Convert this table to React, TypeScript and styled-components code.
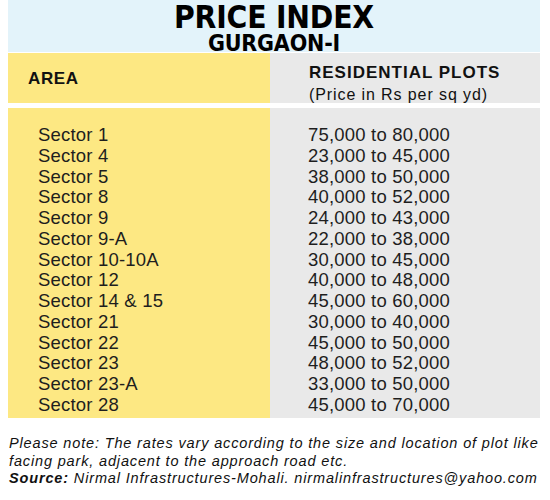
import React from 'react'
import styled, { createGlobalStyle } from 'styled-components'

const rows: [string, string][] = [
  ['Sector 1', '75,000 to 80,000'],
  ['Sector 4', '23,000 to 45,000'],
  ['Sector 5', '38,000 to 50,000'],
  ['Sector 8', '40,000 to 52,000'],
  ['Sector 9', '24,000 to 43,000'],
  ['Sector 9-A', '22,000 to 38,000'],
  ['Sector 10-10A', '30,000 to 45,000'],
  ['Sector 12', '40,000 to 48,000'],
  ['Sector 14 & 15', '45,000 to 60,000'],
  ['Sector 21', '30,000 to 40,000'],
  ['Sector 22', '45,000 to 50,000'],
  ['Sector 23', '48,000 to 52,000'],
  ['Sector 23-A', '33,000 to 50,000'],
  ['Sector 28', '45,000 to 70,000'],
]

const GlobalStyle = createGlobalStyle`
  body {
    margin: 0;
    background: #fff;
    font-family: "Liberation Sans", Arial, sans-serif;
  }
`

export default () => (
  <>
    <GlobalStyle />
    <Page>
      <TitleBlock>
        <Title>PRICE INDEX</Title>
        <SubTitle>GURGAON-I</SubTitle>
      </TitleBlock>
      <Table>
        <HeadCell $tone="yellow">
          <AreaLabel>AREA</AreaLabel>
        </HeadCell>
        <HeadCell $tone="gray">
          <PlotsLabel>RESIDENTIAL PLOTS</PlotsLabel>
          <PlotsNote>(Price in Rs per sq yd)</PlotsNote>
        </HeadCell>
        <BodyCol $tone="yellow" $indent={30}>
          {rows.map(([area]) => (
            <Line key={area}>{area}</Line>
          ))}
        </BodyCol>
        <BodyCol $tone="gray" $indent={38}>
          {rows.map(([area, price]) => (
            <Line key={area}>{price}</Line>
          ))}
        </BodyCol>
      </Table>
      <Notes>
        <p>Please note: The rates vary according to the size and location of plot like</p>
        <p>facing park, adjacent to the approach road etc.</p>
        <p>
          <b>Source:</b> Nirmal Infrastructures-Mohali. nirmalinfrastructures@yahoo.com
        </p>
      </Notes>
    </Page>
  </>
)

const tones = {
  yellow: '#fde883',
  gray: '#e9e9e9',
}

const Page = styled.div`
  width: 532px;
  padding-left: 8px;
`

const TitleBlock = styled.header`
  height: 52px;
  padding-top: 2px;
  box-sizing: border-box;
  background: #e3f3fa;
  text-align: center;
  font-family: "DejaVu Sans Condensed", "DejaVu Sans", sans-serif;
  font-weight: 700;
  color: #000;
`

const Title = styled.h1`
  margin: 0;
  font-size: 31.5px;
  line-height: 30px;
  letter-spacing: -0.2px;
`

const SubTitle = styled.h2`
  margin: 0;
  font-size: 23px;
  line-height: 22px;
  letter-spacing: -0.2px;
`

const Table = styled.div`
  display: grid;
  grid-template-columns: 262px 270px;
  grid-template-rows: 50px 310px;
  row-gap: 5px;
  margin-top: 1px;
  color: #1e1e1e;
`

const HeadCell = styled.div<{ $tone: 'yellow' | 'gray' }>`
  background: ${p => tones[p.$tone]};
  display: flex;
  flex-direction: column;
  padding: ${p => (p.$tone === 'yellow' ? '15px 0 0 20px' : '9px 0 0 39px')};
  box-sizing: border-box;
  color: #111;
`

const AreaLabel = styled.div`
  font-size: 17px;
  line-height: 22px;
  font-weight: 700;
  letter-spacing: 0.6px;
`

const PlotsLabel = styled.div`
  font-size: 17px;
  line-height: 22px;
  font-weight: 700;
  letter-spacing: 1px;
`

const PlotsNote = styled.div`
  font-size: 16px;
  line-height: 22px;
  letter-spacing: 0.9px;
`

const BodyCol = styled.div<{ $tone: 'yellow' | 'gray'; $indent: number }>`
  background: ${p => tones[p.$tone]};
  padding: 17px 0 0 ${p => p.$indent}px;
  box-sizing: border-box;
`

const Line = styled.div`
  font-size: 18.5px;
  line-height: 20.75px;
  letter-spacing: 0.2px;
  white-space: nowrap;
`

const Notes = styled.div`
  padding: 17px 0 0 1px;
  font-style: italic;
  font-size: 14.5px;
  line-height: 17.5px;
  letter-spacing: 0.85px;
  color: #111;
  white-space: nowrap;
  p {
    margin: 0;
  }
  b {
    font-weight: 700;
  }
`
